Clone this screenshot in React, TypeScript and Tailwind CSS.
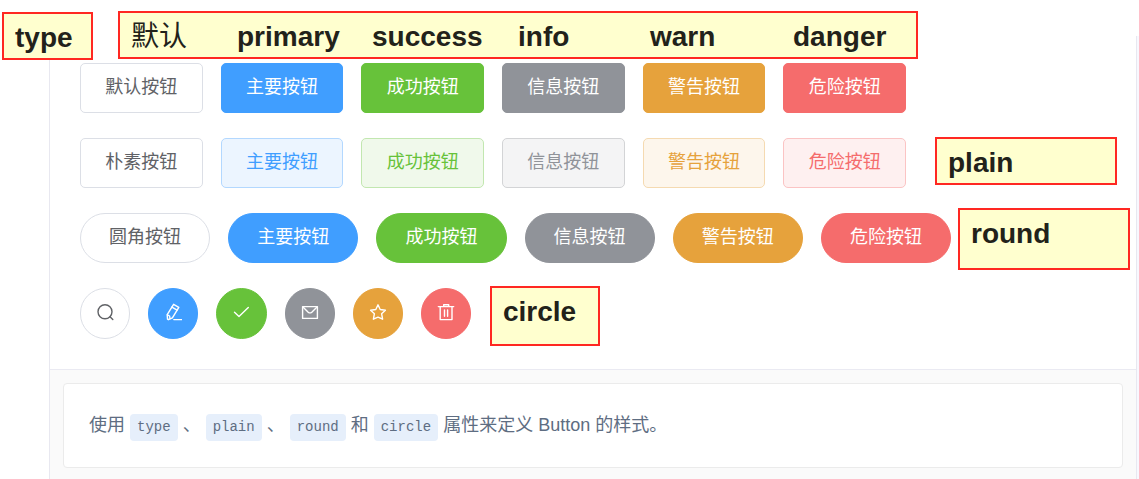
import type { ReactNode } from "react";

const solid = [
  { label: "默认按钮", cls: "border-[#dcdfe6] bg-white text-[#606266]" },
  { label: "主要按钮", cls: "border-[#409eff] bg-[#409eff] text-white" },
  { label: "成功按钮", cls: "border-[#67c23a] bg-[#67c23a] text-white" },
  { label: "信息按钮", cls: "border-[#909399] bg-[#909399] text-white" },
  { label: "警告按钮", cls: "border-[#e6a23c] bg-[#e6a23c] text-white" },
  { label: "危险按钮", cls: "border-[#f56c6c] bg-[#f56c6c] text-white" },
];

const plain = [
  { label: "朴素按钮", cls: "border-[#dcdfe6] bg-white text-[#606266]" },
  { label: "主要按钮", cls: "border-[#b3d8ff] bg-[#ecf5ff] text-[#409eff]" },
  { label: "成功按钮", cls: "border-[#c2e7b0] bg-[#f0f9eb] text-[#67c23a]" },
  { label: "信息按钮", cls: "border-[#d3d4d6] bg-[#f4f4f5] text-[#909399]" },
  { label: "警告按钮", cls: "border-[#f5dab1] bg-[#fdf6ec] text-[#e6a23c]" },
  { label: "危险按钮", cls: "border-[#fbc4c4] bg-[#fef0f0] text-[#f56c6c]" },
];

const icons: { name: string; art: ReactNode }[] = [
  {
    name: "搜索",
    art: (
      <>
        <circle cx="9" cy="8.8" r="7" />
        <path d="M14 13.8l2.8 2.8" />
      </>
    ),
  },
  {
    name: "编辑",
    art: (
      <>
        <path d="M9.6 1.3l5.2 3-6.4 10.6-4 1.8-.9-.6-.3-4.4z" />
        <path d="M7.9 4.1l5.2 3M3.4 11.8l2.2 1.2.4 2.6M9.8 16.6h7.9" />
      </>
    ),
  },
  { name: "确认", art: <path d="M2.5 9.3L7 13.5l9.3-9" /> },
  {
    name: "邮件",
    art: (
      <>
        <path d="M1.6 3.6h14.8v11.8H1.6z" />
        <path d="M2 4l5.2 5.2q1.8 1.4 3.6 0L16 4" />
      </>
    ),
  },
  {
    name: "收藏",
    art: <path d="M9 1.8l2.2 4.7 5.2.7-3.8 3.5 1 5.5L9 14.2l-4.6 2 1-5.5-3.8-3.5 5.2-.7z" />,
  },
  {
    name: "删除",
    art: (
      <>
        <path d="M1.3 3.6h15.4M6.7 3.6V1.7h5v1.9M3.2 3.6v13h11.8v-13" />
        <path d="M7.5 7v6.2M10.6 7v6.2" />
      </>
    ),
  },
];

function Button({ cls, children }: { cls: string; children: ReactNode }) {
  return (
    <button type="button" className={`h-[50px] border pb-0.5 text-[18px] leading-6 ${cls}`}>
      {children}
    </button>
  );
}

function Callout({ place, children }: { place: string; children: ReactNode }) {
  return (
    <div
      className={`absolute border-2 border-[#ff2822] bg-[#ffffcf] px-[11px] pt-1 text-[28px] leading-10 font-bold text-[#22221a] ${place}`}
    >
      {children}
    </div>
  );
}

function Code({ children }: { children: ReactNode }) {
  return (
    <code className="-my-1 inline-block rounded bg-[#e6effb] px-[7px] text-[14px] leading-[27px] [font-family:'Liberation_Mono',monospace]">
      {children}
    </code>
  );
}

export default function App() {
  return (
    <div className="relative flex min-h-screen flex-col overflow-hidden bg-white pt-9 pr-0.5 pl-[49px] [font-family:'Liberation_Sans','Noto_Sans_CJK_SC',sans-serif]">
      <main className="flex flex-1 flex-col border-x border-[#e8e8f0] shadow-[2px_0_0_#f8f8fe]">
        <section className="flex flex-col gap-[25px] border-b border-[#eaeaf2] px-[30px] pt-[27px] pb-[30px]">
          <div className="grid max-w-[826px] grid-cols-6 gap-[18px]">
            {solid.map((b) => (
              <Button key={b.label} cls={`rounded-[5px] ${b.cls}`}>{b.label}</Button>
            ))}
          </div>
          <div className="grid max-w-[826px] grid-cols-6 gap-[18px]">
            {plain.map((b) => (
              <Button key={b.label} cls={`rounded-[5px] ${b.cls}`}>{b.label}</Button>
            ))}
          </div>
          <div className="grid max-w-[871px] grid-cols-6 gap-[18px]">
            {solid.map((b, i) => (
              <Button key={b.label} cls={`rounded-full ${b.cls}`}>{i === 0 ? "圆角按钮" : b.label}</Button>
            ))}
          </div>
          <div className="grid max-w-[391px] grid-cols-6 gap-[18px]">
            {icons.map((icon, i) => (
              <button
                key={icon.name}
                type="button"
                aria-label={icon.name}
                className={`flex h-[51px] items-center justify-center rounded-full border pb-[3px] ${solid[i].cls}`}
              >
                <svg
                  viewBox="0 0 18 18"
                  className="size-[18px]"
                  fill="none"
                  stroke="currentColor"
                  strokeWidth="1.4"
                  strokeLinejoin="round"
                  strokeLinecap="round"
                >
                  {icon.art}
                </svg>
              </button>
            ))}
          </div>
        </section>
        <section className="flex-1 bg-[#fafafa] p-[13px] pb-[11px]">
          <p className="rounded border border-[#ebebeb] bg-white px-[25px] py-7 text-[18px] leading-[27px] text-[#5e6d82]">
            使用 <Code>type</Code> 、 <Code>plain</Code> 、 <Code>round</Code> 和 <Code>circle</Code> 属性来定义 Button 的样式。
          </p>
        </section>
      </main>

      <Callout place="left-[2px] top-[12px] h-[48px] w-[91px]">type</Callout>
      <Callout place="left-[118px] top-[11px] grid h-[48px] w-[800px] grid-cols-[106px_135px_146px_132px_143px_auto]">
        <span className="font-normal">默认</span>
        <span>primary</span>
        <span>success</span>
        <span>info</span>
        <span>warn</span>
        <span>danger</span>
      </Callout>
      <Callout place="left-[935px] top-[137px] h-[48px] w-[182px]">plain</Callout>
      <Callout place="left-[958px] top-[208px] h-[62px] w-[172px]">round</Callout>
      <Callout place="left-[490px] top-[286px] h-[60px] w-[110px]">circle</Callout>
    </div>
  );
}
